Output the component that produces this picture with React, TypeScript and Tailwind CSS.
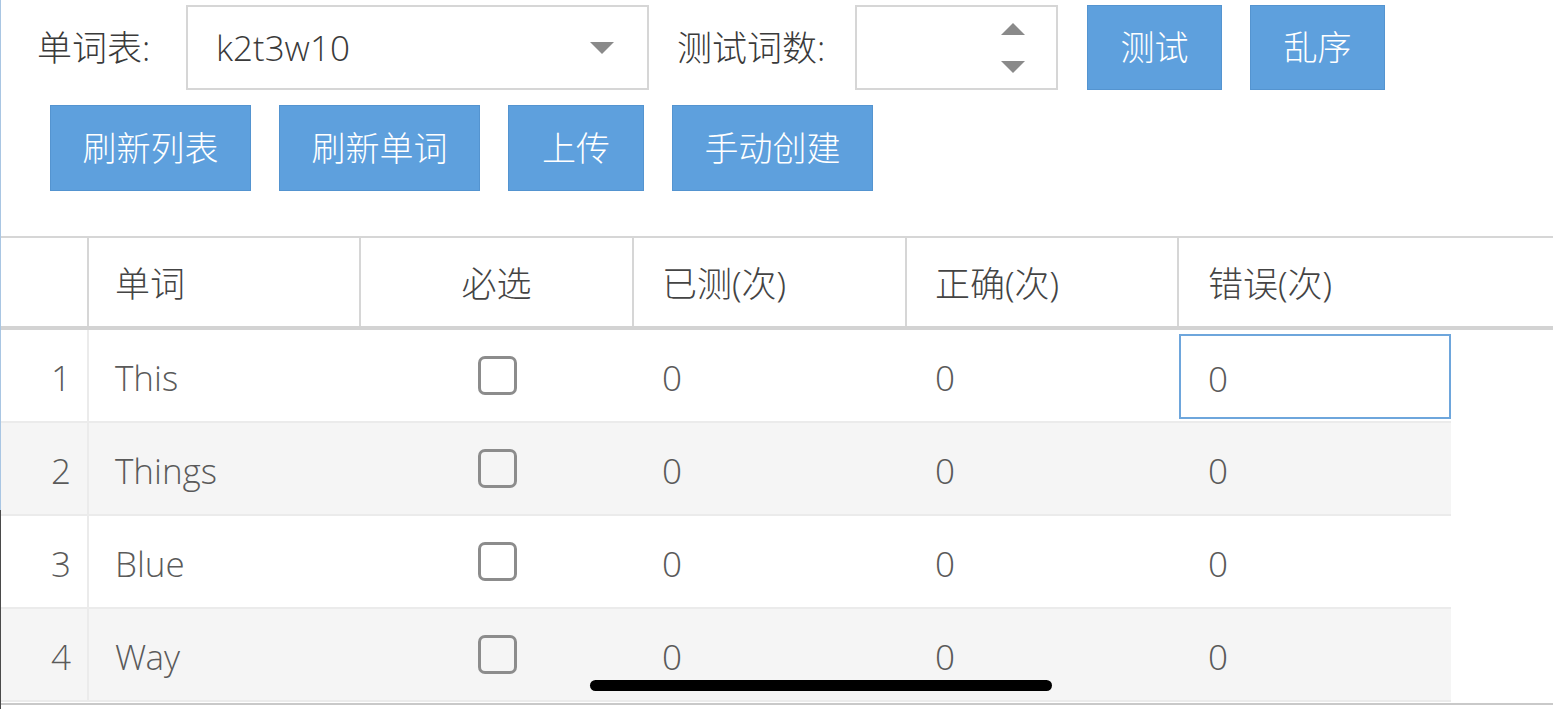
const words = ["This", "Things", "Blue", "Way"];

const font = "font-['Open_Sans_Light','Open_Sans','Noto_Sans_CJK_SC',sans-serif]";

function Triangle({ up = false }: { up?: boolean }) {
  return (
    <svg width="26" height="14" viewBox="0 0 26 14" className="block">
      {up ? (
        <path d="M13 1 L25 13 L1 13 Z" fill="#8a8a8a" />
      ) : (
        <path d="M1 1 L25 1 L13 13 Z" fill="#8a8a8a" />
      )}
    </svg>
  );
}

function BlueButton({ label, w }: { label: string; w: string }) {
  return (
    <button
      type="button"
      className={`${w} h-full flex items-center justify-center bg-[#5ea0dd] border border-[#5494d0] text-white text-[34px] font-light`}
    >
      {label}
    </button>
  );
}

export default function App() {
  return (
    <div className={`relative w-[1553px] h-[709px] overflow-hidden bg-white flex ${font}`}>
      {/* window edge */}
      <div className="w-px flex flex-col shrink-0">
        <div className="h-[510px] bg-[#a9c6e3]" />
        <div className="flex-1 bg-[#4a4a4a]" />
      </div>

      <div className="flex-1 flex flex-col">
        {/* controls */}
        <div className="flex items-center h-[85px] mt-[5px] pl-[36px] text-[#3a3a3a]">
          <span className="w-[149px] text-[35px] font-light pt-[2px]">单词表:</span>
          <div className="w-[463px] h-full border-2 border-[#d6d6d6] flex items-center justify-between pl-[28px] pr-[32px]">
            <span className="text-[35px] font-light text-[#3a3a3a] pt-[2px]">k2t3w10</span>
            <Triangle />
          </div>
          <span className="ml-[28px] w-[178px] text-[35px] font-light pt-[2px]">测试词数:</span>
          <div className="w-[203px] h-full border-2 border-[#d6d6d6] flex flex-col items-end justify-center gap-[24px] pr-[30px]">
            <Triangle up />
            <Triangle />
          </div>
          <div className="ml-[29px] h-full flex gap-[28px]">
            <BlueButton label="测试" w="w-[135px]" />
            <BlueButton label="乱序" w="w-[135px]" />
          </div>
        </div>

        <div className="flex h-[86px] mt-[15px] pl-[49px] gap-[28px]">
          <BlueButton label="刷新列表" w="w-[201px]" />
          <BlueButton label="刷新单词" w="w-[201px]" />
          <BlueButton label="上传" w="w-[136px]" />
          <BlueButton label="手动创建" w="w-[201px]" />
        </div>

        {/* table */}
        <div className="mt-[45px] text-[35px] font-light">
          <div className="flex h-[94px] border-t-2 border-b-4 border-t-[#d6d6d6] border-b-[#d3d3d3] text-[#444]">
            <div className="w-[88px] border-r-2 border-[#d6d6d6]" />
            <div className="w-[272px] border-r-2 border-[#d6d6d6] flex items-center pl-[26px] pt-[4px]">单词</div>
            <div className="w-[273px] border-r-2 border-[#d6d6d6] flex items-center justify-center pt-[4px]">必选</div>
            <div className="w-[273px] border-r-2 border-[#d6d6d6] flex items-center pl-[28px] pt-[4px]">已测(次)</div>
            <div className="w-[272px] border-r-2 border-[#d6d6d6] flex items-center pl-[28px] pt-[4px]">正确(次)</div>
            <div className="flex-1 flex items-center pl-[29px] pt-[4px]">错误(次)</div>
          </div>

          {words.map((w, i) => (
            <div
              key={w}
              className={`flex w-[1450px] h-[93px] border-b-2 border-[#ebebeb] text-[#5a5a5a] ${i % 2 === 1 ? "bg-[#f5f5f5]" : "bg-white"}`}
            >
              <div className="w-[88px] border-r-2 border-[#ebebeb] flex items-center justify-end pr-[16px] pt-[6px]">{i + 1}</div>
              <div className="w-[272px] flex items-center pl-[26px] pt-[6px]">{w}</div>
              <div className="w-[273px] flex items-center justify-center">
                <div className="w-[39px] h-[39px] border-[3px] border-[#8c8c8c] rounded-[7px]" />
              </div>
              <div className="w-[273px] flex items-center pl-[28px] pt-[6px]">0</div>
              <div className="w-[272px] flex items-center pl-[28px] pt-[6px]">0</div>
              {i === 0 ? (
                <div className="flex-1 pt-[4px] pb-[2px]">
                  <div className="h-full border-2 border-[#6ea6dc] flex items-center pl-[27px] pt-[6px]">0</div>
                </div>
              ) : (
                <div className="flex-1 flex items-center pl-[29px] pt-[6px]">0</div>
              )}
            </div>
          ))}
          <div className="mt-[1px] border-t-2 border-[#c9c9c9]" />
        </div>
      </div>

      {/* home indicator */}
      <div className="absolute left-[590px] top-[680px] w-[462px] h-[11px] rounded-full bg-black" />
    </div>
  );
}
